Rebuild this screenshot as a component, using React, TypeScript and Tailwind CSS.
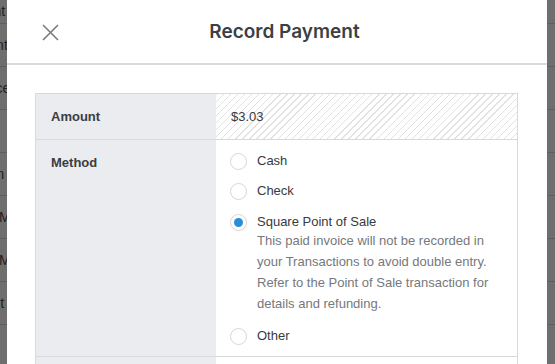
import React from "react";

const bgRows = [
    {text: "ount", ml: "-ml-[22px]", h: "h-[24px]"},
    {text: "Client", ml: "-ml-[28px]", h: "h-[43px]"},
    {text: "Invoice", ml: "-ml-[34px]", h: "h-[43px]"},
    {text: "", ml: "", h: "h-[43px]"},
    {text: "Custom", ml: "-ml-[44px]", h: "h-[43px]"},
    {text: "My Items", ml: "-ml-[1px]", h: "h-[43px]"},
    {text: "My Files", ml: "-ml-[1px]", h: "h-[43px]"},
    {text: "Edit", ml: "-ml-[20px]", h: "h-[43px]"},
    {text: "Terms", ml: "-ml-[40px]", h: "h-[43px]"},
];

const Radio = ({checked}: {checked?: boolean}) => (
    <span className="w-[17px] h-[17px] rounded-full border border-[#d4d6d9] bg-white flex items-center justify-center shrink-0">
        {checked && <span className="w-[9px] h-[9px] rounded-full bg-[#2a8ed6]"/>}
    </span>
);

const Option = ({label, checked}: {label: string; checked?: boolean}) => (
    <div className="h-[30px] flex items-center gap-[10px]">
        <Radio checked={checked}/>
        <span className="text-[13px] text-[#373a3e]">{label}</span>
    </div>
);

const App = () => {
    return (
        <div className="w-[555px] h-[364px] overflow-hidden flex bg-[#6e6e6e] font-['Liberation_Sans',sans-serif]">
            {/* page behind the overlay */}
            <div className="w-[7px] shrink-0 flex flex-col">
                {bgRows.map((row, i) => (
                    <div key={i} className={`${row.h} shrink-0 border-b border-[#5e5e5e] overflow-hidden flex items-center`}>
                        <span className={`${row.ml} whitespace-nowrap text-[14px] text-[#1e1e1e]`}>{row.text}</span>
                    </div>
                ))}
            </div>

            <div className="w-[540px] shrink-0 bg-white flex flex-col">
                <header className="h-[65px] shrink-0 flex items-center relative border-b-2 border-[#dadada]">
                    <button className="ml-[28px] mt-[1px] w-[31px] h-[31px] flex items-center justify-center">
                        <svg width="17" height="17" viewBox="0 0 17 17" fill="none" stroke="#7a7c80" strokeWidth="1.6">
                            <path d="M1 1 L16 16 M16 1 L1 16"/>
                        </svg>
                    </button>
                    <h1 className="absolute left-[15px] right-0 top-[20px] text-center text-[19px] leading-[24px] font-semibold text-[#3c3f44] pointer-events-none font-['Inter',sans-serif]">
                        Record Payment
                    </h1>
                </header>

                <div className="pt-[28px] px-[28px]">
                    <div className="w-[483px] border border-[#d8d9dc]">
                        <div className="flex border-b border-[#d8d9dc]">
                            <div className="w-[180px] bg-[#ebecef] px-[15px] pt-[14px] pb-[13px] leading-[18px] text-[13px] font-semibold text-[#3a3d41]">
                                Amount
                            </div>
                            <div className="flex-1 px-[15px] pt-[14px] pb-[13px] leading-[18px] text-[13px] text-[#373a3e] bg-[image:repeating-linear-gradient(135deg,#e2e2e2_0px,#e2e2e2_1px,#ffffff_1px,#ffffff_5px)]">
                                $3.03
                            </div>
                        </div>
                        <div className="flex border-b border-[#d8d9dc]">
                            <div className="w-[180px] bg-[#ebecef] px-[15px] pt-[14px] leading-[18px] text-[13px] font-semibold text-[#3a3d41]">
                                Method
                            </div>
                            <div className="flex-1 pl-[14px] pt-[6px] pb-[5px] flex flex-col">
                                <Option label="Cash"/>
                                <Option label="Check"/>
                                <div className="mt-[1px]">
                                    <Option label="Square Point of Sale" checked/>
                                </div>
                                <p className="-mt-[7px] mb-[7px] pl-[27px] w-[270px] text-[13px] leading-[21px] text-[#75787c]">
                                    This paid invoice will not be recorded in your Transactions to avoid double entry. Refer to the Point of Sale transaction for details and refunding.
                                </p>
                                <Option label="Other"/>
                            </div>
                        </div>
                        <div className="flex h-[40px]">
                            <div className="w-[180px] bg-[#ebecef]"/>
                            <div className="flex-1"/>
                        </div>
                    </div>
                </div>
            </div>

            <div className="flex-1 flex flex-col">
                {bgRows.map((row, i) => (
                    <div key={i} className={`${row.h} shrink-0 border-b border-[#5e5e5e]`}/>
                ))}
            </div>
        </div>
    );
};

export default App;
